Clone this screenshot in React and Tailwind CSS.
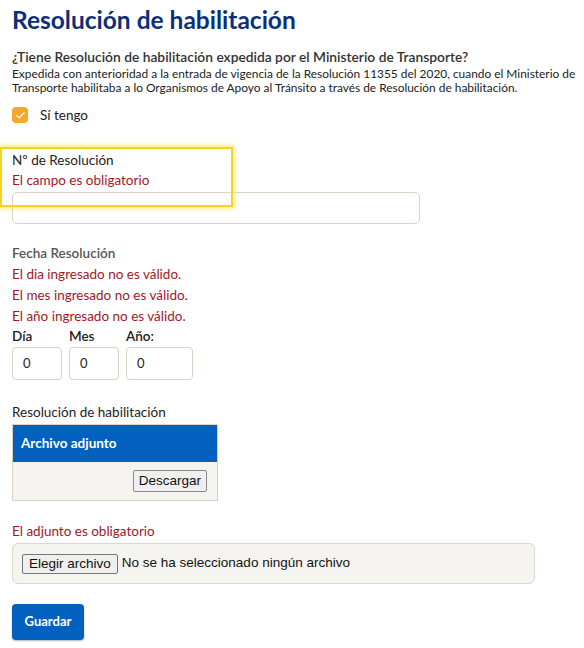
import { Check } from 'lucide-react';

export default function App() {
  return (
    <div className="min-h-screen bg-white px-3 pt-[4px] text-[#222] font-['Lato','Liberation_Sans',sans-serif]">
      <h1 className="text-[24.5px] leading-[31px] font-bold text-[#0c2f7a]">Resolución de habilitación</h1>

      <p className="mt-[13px] text-[13.8px] leading-[18px] font-semibold text-[#333]">
        ¿Tiene Resolución de habilitación expedida por el Ministerio de Transporte?
      </p>
      <p className="mt-[1px] text-[11.9px] leading-[14px] text-[#222] whitespace-nowrap">
        Expedida con anterioridad a la entrada de vigencia de la Resolución 11355 del 2020, cuando el Ministerio de
        <br />
        Transporte habilitaba a lo Organismos de Apoyo al Tránsito a través de Resolución de habilitación.
      </p>

      <label className="mt-[12px] flex items-center gap-3">
        <span className="w-4 h-4 rounded-[4px] bg-[#f6a82c] flex items-center justify-center">
          <Check size={11} strokeWidth={2.5} className="text-white" />
        </span>
        <span className="text-[13.5px] leading-4">Sí tengo</span>
      </label>

      {/* Nº de Resolución with highlight */}
      <div className="relative mt-[27px]">
        <div className="absolute -left-3 -top-[3px] w-[233px] h-[60px] border-2 border-[#f8d51c] shadow-[0_0_4px_2px_rgba(250,225,60,0.6)] pointer-events-none" />
        <p className="text-[13.5px] leading-[20px]">Nº de Resolución</p>
        <p className="text-[13.5px] leading-[20px] text-[#a5161f]">El campo es obligatorio</p>
        <input className="mt-[2px] w-[408px] h-[32px] rounded-[5px] border border-[#d9d2c5] bg-white" />
      </div>

      <div className="mt-[19px]">
        <p className="text-[13.5px] leading-[21px] font-semibold text-[#555]">Fecha Resolución</p>
        <p className="text-[13.5px] leading-[21px] text-[#a5161f]">El dia ingresado no es válido.</p>
        <p className="text-[13.5px] leading-[21px] text-[#a5161f]">El mes ingresado no es válido.</p>
        <p className="text-[13.5px] leading-[21px] text-[#a5161f]">El año ingresado no es válido.</p>
        <div className="flex gap-[7px]">
          <div className="flex flex-col">
            <span className="text-[13.5px] leading-[18px] font-semibold">Día</span>
            <div className="mt-[2px] w-[50px] h-[33px] rounded-[4px] border border-[#d9d2c5] flex items-center px-[10px] text-[13px]">0</div>
          </div>
          <div className="flex flex-col">
            <span className="text-[13.5px] leading-[18px] font-semibold">Mes</span>
            <div className="mt-[2px] w-[50px] h-[33px] rounded-[4px] border border-[#d9d2c5] flex items-center px-[10px] text-[13px]">0</div>
          </div>
          <div className="flex flex-col">
            <span className="text-[13.5px] leading-[18px] font-semibold">Año:</span>
            <div className="mt-[2px] w-[67px] h-[33px] rounded-[4px] border border-[#d9d2c5] flex items-center px-[10px] text-[13px]">0</div>
          </div>
        </div>
      </div>

      <div className="mt-[22px]">
        <p className="text-[13.5px] leading-[20px]">Resolución de habilitación</p>
        <div className="mt-[2px] w-[206px] border border-[#d9d2c5]">
          <div className="h-[37px] bg-[#0261be] flex items-center px-[8px] text-white font-bold text-[13.5px]">Archivo adjunto</div>
          <div className="h-[38px] bg-[#f5f3ef] flex items-center justify-end pr-[10px]">
            <button className="h-[22px] px-[5px] border border-[#8a8a8a] rounded-[2px] bg-[#efefef] text-[13.5px] text-[#111] font-['Liberation_Sans',sans-serif]">Descargar</button>
          </div>
        </div>
      </div>

      <p className="mt-[20px] text-[13.5px] leading-[20px] text-[#a5161f]">El adjunto es obligatorio</p>
      <div className="mt-[2px] w-[523px] h-[41px] rounded-[6px] border border-[#ddd6c9] bg-[#f6f4f0] flex items-center px-[9px] font-['Liberation_Sans',sans-serif] text-[13.5px] text-[#111]">
        <button className="h-[20px] px-[6px] border border-[#767676] rounded-[2px] bg-[#efefef] leading-[18px]">Elegir archivo</button>
        <span className="ml-[4px]">No se ha seleccionado ningún archivo</span>
      </div>

      <button className="mt-[20px] h-[36px] w-[72px] rounded-[4px] bg-[#0261be] text-white font-bold text-[13px] shadow-[0_1px_2px_rgba(0,0,0,0.3)]">
        Guardar
      </button>
    </div>
  );
}
